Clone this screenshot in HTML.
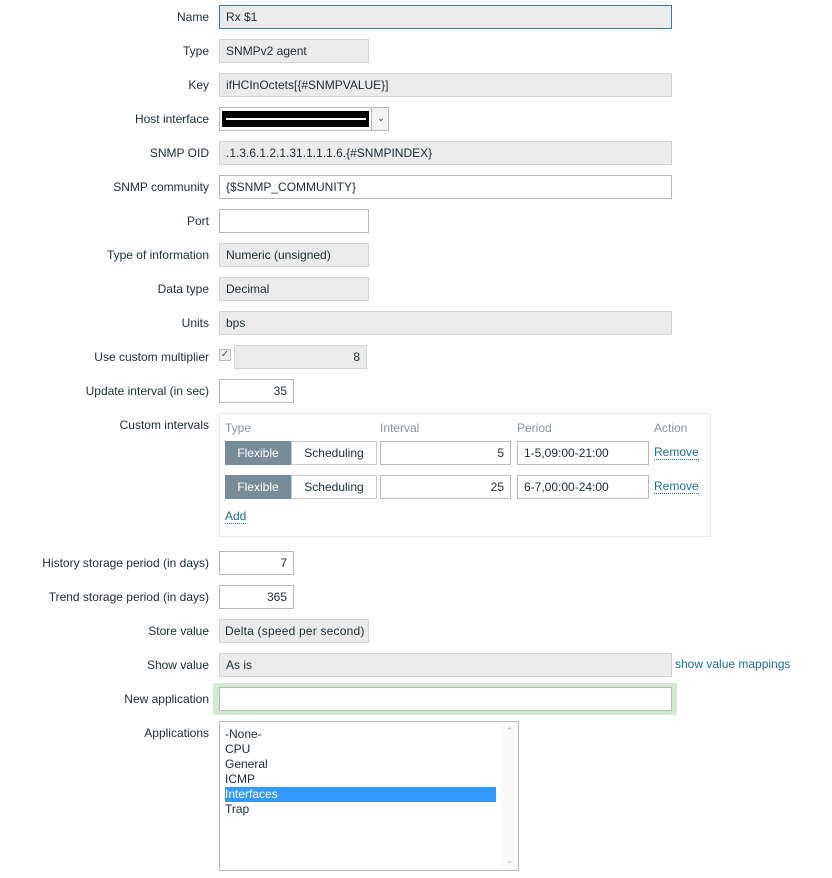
<!DOCTYPE html><html><head><style>
body{margin:0;width:832px;height:878px;background:#fff;font-family:"Liberation Sans",Arial,sans-serif;font-size:12px;color:#1f2c33;position:relative;overflow:hidden}
.l{position:absolute;right:623px;text-align:right;white-space:nowrap;line-height:14px;margin-top:1px}
.f{position:absolute;box-sizing:border-box;height:24px;border:1px solid #d3d3d3;background:#ebebeb;padding:0 6px;line-height:22px;white-space:nowrap;overflow:hidden}
.w{background:#fff;border-color:#b8b8b8}
.r{text-align:right}
.h{position:absolute;color:#8a949a;top:421px}
a{color:#1f6d93;text-decoration:none;border-bottom:1px dotted #1f6d93;position:absolute}
.fl{position:absolute;box-sizing:border-box;height:24px;width:66px;background:#768d99;color:#fff;text-align:center;line-height:24px;left:225px}
.sc{position:absolute;box-sizing:border-box;height:24px;width:86px;border:1px solid #c8c8c8;left:291px;text-align:center;line-height:22px}
</style></head><body>
<div class="l" style="top:9px">Name</div><div class="f" style="left:219px;top:5px;width:453px;border-color:#3d7a99">Rx $1</div>
<div class="l" style="top:43px">Type</div><div class="f" style="left:219px;top:39px;width:150px">SNMPv2 agent</div>
<div class="l" style="top:77px">Key</div><div class="f" style="left:219px;top:73px;width:453px">ifHCInOctets[{#SNMPVALUE}]</div>
<div class="l" style="top:111px">Host interface</div>
<div class="f w" style="left:219px;top:107px;width:170px;padding:0"><div style="position:absolute;left:2px;top:3px;width:147px;height:16px;background:#000"></div><div style="position:absolute;left:6px;top:10px;width:140px;height:2px;background:#fff"></div><div style="position:absolute;left:151px;top:0;width:18px;height:22px;border-left:1px solid #b8b8b8;background:#f4f4f4;text-align:center;line-height:22px;font-size:10px;color:#555">&#8964;</div></div>
<div class="l" style="top:145px">SNMP OID</div><div class="f" style="left:219px;top:141px;width:453px">.1.3.6.1.2.1.31.1.1.1.6.{#SNMPINDEX}</div>
<div class="l" style="top:179px">SNMP community</div><div class="f w" style="left:219px;top:175px;width:453px">{$SNMP_COMMUNITY}</div>
<div class="l" style="top:213px">Port</div><div class="f w" style="left:219px;top:209px;width:150px"></div>
<div class="l" style="top:247px">Type of information</div><div class="f" style="left:219px;top:243px;width:150px">Numeric (unsigned)</div>
<div class="l" style="top:281px">Data type</div><div class="f" style="left:219px;top:277px;width:150px">Decimal</div>
<div class="l" style="top:315px">Units</div><div class="f" style="left:219px;top:311px;width:453px">bps</div>
<div class="l" style="top:349px">Use custom multiplier</div>
<div style="position:absolute;left:219px;top:349px;width:12px;height:12px;border:1px solid #bbb;box-sizing:border-box;background:#eee;font-size:10px;line-height:10px;text-align:center;color:#555">&#10003;</div>
<div class="f r" style="left:234px;top:345px;width:133px">8</div>
<div class="l" style="top:383px">Update interval (in sec)</div><div class="f w r" style="left:219px;top:379px;width:75px">35</div>
<div class="l" style="top:417px">Custom intervals</div>
<div style="position:absolute;left:219px;top:413px;width:492px;height:124px;border:1px solid #ebebeb;box-sizing:border-box"></div>
<div class="h" style="left:225px">Type</div><div class="h" style="left:380px">Interval</div><div class="h" style="left:517px">Period</div><div class="h" style="left:654px">Action</div>
<div class="fl" style="top:441px">Flexible</div><div class="sc" style="top:441px">Scheduling</div>
<div class="f w r" style="left:380px;top:441px;width:131px">5</div><div class="f w" style="left:517px;top:441px;width:132px">1-5,09:00-21:00</div><a style="left:654px;top:446px;line-height:13px">Remove</a>
<div class="fl" style="top:475px">Flexible</div><div class="sc" style="top:475px">Scheduling</div>
<div class="f w r" style="left:380px;top:475px;width:131px">25</div><div class="f w" style="left:517px;top:475px;width:132px">6-7,00:00-24:00</div><a style="left:654px;top:480px;line-height:13px">Remove</a>
<a style="left:225px;top:510px;line-height:13px">Add</a>
<div class="l" style="top:555px">History storage period (in days)</div><div class="f w r" style="left:219px;top:551px;width:75px">7</div>
<div class="l" style="top:589px">Trend storage period (in days)</div><div class="f w r" style="left:219px;top:585px;width:75px">365</div>
<div class="l" style="top:623px">Store value</div><div class="f" style="left:219px;top:619px;width:150px;padding-left:5px;letter-spacing:0.2px">Delta (speed per second)</div>
<div class="l" style="top:657px">Show value</div><div class="f" style="left:219px;top:653px;width:453px">As is</div><a style="left:675px;top:657px;border:none;line-height:14px">show value mappings</a>
<div class="l" style="top:691px">New application</div>
<div style="position:absolute;left:213px;top:683px;width:464px;height:32px;background:#d4e8d4;border-radius:2px"></div>
<div class="f w" style="left:219px;top:687px;width:453px"></div>
<div class="l" style="top:725px">Applications</div>
<div style="position:absolute;left:219px;top:721px;width:300px;height:150px;border:1px solid #b8b8b8;box-sizing:border-box;line-height:15px;padding:5px 0 0 5px">
<div>-None-</div><div>CPU</div><div>General</div><div>ICMP</div><div style="background:#3399ff;color:#fff;width:271px">Interfaces</div><div>Trap</div>
<div style="position:absolute;right:0;top:0;width:17px;height:148px;background:#fafafa;color:#bbb;font-size:9px;text-align:center"><div style="margin-top:2px">&#8963;</div><div style="position:absolute;bottom:2px;width:17px">&#8964;</div></div>
</div>
</body></html>
